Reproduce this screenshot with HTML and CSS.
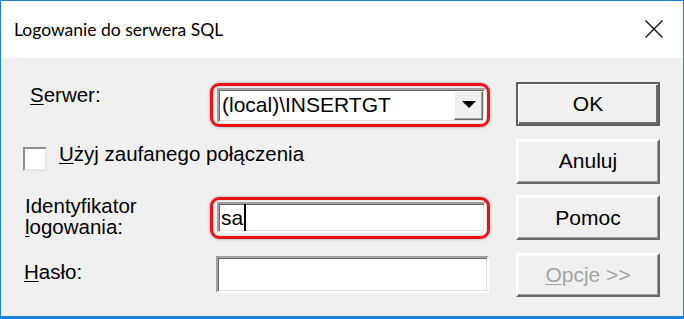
FILE: index.html
```html
<!DOCTYPE html>
<html lang="pl">
<head>
<meta charset="utf-8">
<title>Logowanie do serwera SQL</title>
<link rel="stylesheet" href="styles.css">
</head>
<body>
<div class="window">
  <div class="titlebar">
    <span class="title">Logowanie do serwera SQL</span>
    <svg class="close" width="20" height="20" viewBox="0 0 20 20" aria-label="Zamknij">
      <path d="M1.5 1.5 L18.5 18.5 M18.5 1.5 L1.5 18.5" stroke="#111" stroke-width="1.4" fill="none"/>
    </svg>
  </div>
  <div class="body">
    <div class="form">
      <label class="lbl lbl-server"><u>S</u>erwer:</label>
      <div class="field combo hl hl-combo">
        <span class="val">(local)\INSERTGT</span>
        <span class="drop">
          <svg width="14" height="8" viewBox="0 0 14 8"><path d="M0 0 H14 L7 7 Z" fill="#000"/></svg>
        </span>
      </div>
      <button class="btn default">OK</button>

      <label class="check">
        <span class="box"></span>
        <span class="check-text"><u>U</u>żyj zaufanego połączenia</span>
      </label>
      <button class="btn">Anuluj</button>

      <label class="lbl lbl-id">Identyfikator<br><u>l</u>ogowania:</label>
      <div class="field edit hl hl-login"><span class="val">sa</span><span class="caret"></span></div>
      <button class="btn">Pomoc</button>

      <label class="lbl lbl-pass"><u>H</u>asło:</label>
      <div class="field edit pass"></div>
      <button class="btn disabled"><u>O</u>pcje &gt;&gt;</button>
    </div>
  </div>
</div>
</body>
</html>
```
FILE: styles.css
```css
html, body {
  margin: 0;
  padding: 0;
}
body {
  width: 684px;
  height: 319px;
  overflow: hidden;
  font-family: "Liberation Sans", Arial, sans-serif;
  font-size: 20.5px;
  color: #000;
}
u {
  text-decoration: underline;
  text-underline-offset: 2px;
  text-decoration-thickness: 1px;
}
.window {
  box-sizing: border-box;
  width: 684px;
  height: 319px;
  border: 1px solid #1b7fd8;
  border-bottom-width: 3px;
  background: #f0f0f0;
  display: flex;
  flex-direction: column;
}
.titlebar {
  height: 57px;
  flex: none;
  background: #fff;
  display: flex;
  align-items: center;
  justify-content: space-between;
  padding: 0 19px 0 13px;
}
.title {
  font-family: Lato, "Liberation Sans", sans-serif;
  font-size: 17.5px;
  color: #000;
  margin-top: -1px;
}
.close {
  display: block;
  margin-top: -1px;
}
.body {
  flex: 1;
  padding: 24px 0 0 23px;
}
.form {
  display: grid;
  grid-template-columns: 163px 269px 144px;
  grid-template-rows: 45px 45px 45px 45px;
  column-gap: 30px;
  row-gap: 11.5px;
}
.lbl {
  align-self: start;
  line-height: 22px;
}
.lbl-server {
  margin-top: 2px;
  padding-left: 6px;
}
.lbl-id {
  line-height: 21px;
  margin-top: 0;
  padding-left: 1px;
}
.lbl-pass {
  margin-top: 9px;
}
.check {
  grid-column: 1 / 3;
  display: flex;
  align-items: flex-start;
  gap: 12px;
  margin-left: -1px;
}
.check .box {
  box-sizing: border-box;
  flex: none;
  width: 24px;
  height: 24px;
  margin-top: 8px;
  background: #fff;
  border: 2px solid;
  border-color: #8f8f8f #e6e6e6 #e6e6e6 #8f8f8f;
}
.check-text {
  line-height: 22px;
  margin-top: 4px;
}
.field {
  box-sizing: border-box;
  position: relative;
  align-self: center;
  background: #fff;
  border: 2px solid;
  border-color: #a0a0a0 #fff #fff #a0a0a0;
  box-shadow: inset 1px 1px #6a6a6a, inset -1px -1px #e3e3e3;
  display: flex;
  align-items: center;
  font-size: 21px;
}
.combo {
  height: 35px;
  margin-top: 1px;
}
.combo .val {
  flex: 1;
  padding-left: 3px;
}
.drop {
  box-sizing: border-box;
  align-self: stretch;
  width: 29px;
  margin: 1px 1px 1px 0;
  background: #f0f0f0;
  border: 1px solid;
  border-color: #fff #6a6a6a #6a6a6a #fff;
  box-shadow: inset -1px -1px #a0a0a0;
  display: flex;
  align-items: center;
  justify-content: center;
}
.drop svg {
  display: block;
}
.edit {
  height: 31px;
}
.edit .val {
  padding-left: 2px;
}
.caret {
  width: 2px;
  height: 27px;
  background: #000;
  margin-left: 1px;
}
.pass {
  height: 37px;
  margin-left: -1px;
  margin-right: -3px;
}
.hl::after {
  content: "";
  position: absolute;
  left: -9px;
  right: -6px;
  top: -7px;
  bottom: -6px;
  border: 3px solid #ee1018;
  border-radius: 9px;
  box-shadow: 0 0 3px rgba(0, 0, 0, 0.35), inset 0 0 2px rgba(0, 0, 0, 0.2);
  pointer-events: none;
}
.hl-login::after {
  top: -7px;
  bottom: -8px;
}
.btn {
  box-sizing: border-box;
  height: 45px;
  width: 144px;
  margin: 0;
  padding: 0;
  font: inherit;
  font-size: 21px;
  color: #000;
  background: #f0f0f0;
  border: 2px solid;
  border-color: #fff #696969 #696969 #fff;
  box-shadow: inset -1px -1px #a0a0a0, inset 1px 1px #f8f8f8;
  align-self: start;
}
.btn.default {
  height: 44px;
  border: 2px solid #5f5f5f;
  box-shadow: inset 1px 1px #fff, inset -2px -2px #6a6a6a;
}
.btn.disabled {
  color: #a3a3a3;
  margin-top: 1px;
  height: 44px;
}
```
